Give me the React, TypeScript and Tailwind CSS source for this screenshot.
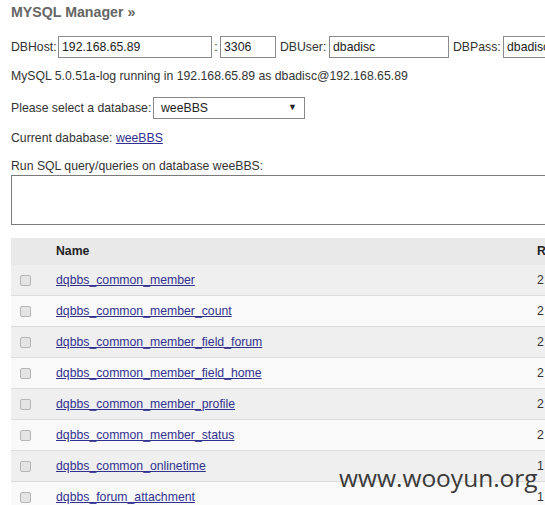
const tables = [
  { name: "dqbbs_common_member", rows: "2" },
  { name: "dqbbs_common_member_count", rows: "2" },
  { name: "dqbbs_common_member_field_forum", rows: "2" },
  { name: "dqbbs_common_member_field_home", rows: "2" },
  { name: "dqbbs_common_member_profile", rows: "2" },
  { name: "dqbbs_common_member_status", rows: "2" },
  { name: "dqbbs_common_onlinetime", rows: "1" },
  { name: "dqbbs_forum_attachment", rows: "1" },
];

function Field({ value, width }: { value: string; width: string }) {
  return (
    <div
      className={`${width} h-[22px] shrink-0 border border-[#8a8a8a] bg-white pl-[3px] leading-[20px] text-[#222]`}
    >
      {value}
    </div>
  );
}

export default function App() {
  return (
    <div className="relative h-[505px] w-[545px] overflow-hidden whitespace-nowrap bg-white font-['Liberation_Sans',Arial,sans-serif] text-[12.25px] text-[#333]">
      <div className="flex w-[600px] flex-col pl-[11px]">
        <div className="h-[24px] pt-[1px] text-[14.2px] font-bold leading-[22px] text-[#666]">
          MYSQL Manager »
        </div>

        <div className="mt-[12px] flex h-[22px] items-center">
          <span className="w-[47px] shrink-0">DBHost:</span>
          <Field value="192.168.65.89" width="w-[154px]" />
          <span className="w-[8px] shrink-0 text-center">:</span>
          <Field value="3306" width="w-[56px]" />
          <span className="w-[53px] shrink-0 pl-[4px]">DBUser:</span>
          <Field value="dbadisc" width="w-[120px]" />
          <span className="w-[54px] shrink-0 pl-[4px]">DBPass:</span>
          <Field value="dbadisc" width="w-[122px]" />
        </div>

        <div className="mt-[10px] h-[16px] leading-[16px]">
          MySQL 5.0.51a-log running in 192.168.65.89 as dbadisc@192.168.65.89
        </div>

        <div className="mt-[13px] flex h-[22px] items-center">
          <span className="w-[142px] shrink-0">Please select a database:</span>
          <div className="flex h-[22px] w-[152px] items-center justify-between border border-[#8a8a8a] bg-white pl-[7px] pr-[7px] text-[#222]">
            <span>weeBBS</span>
            <span className="text-[9px]">▼</span>
          </div>
        </div>

        <div className="mt-[11px] h-[16px] leading-[16px]">
          Current dababase:{" "}
          <a href="#" className="text-[#31318f] underline">
            weeBBS
          </a>
        </div>

        <div className="mt-[12px] h-[16px] leading-[16px]">
          Run SQL query/queries on database weeBBS:
        </div>

        <textarea className="mt-[1px] h-[50px] w-[560px] resize-none border border-[#7a7a7a] bg-white" />

        <div className="mt-[13px] w-[580px]">
          <div className="flex h-[27px] items-center bg-[#e9e9e9] font-bold text-[#222]">
            <div className="w-[45px] shrink-0" />
            <div className="w-[481px] shrink-0">Name</div>
            <div className="flex-1">R</div>
          </div>
          {tables.map((t, i) => (
            <div
              key={t.name}
              className={`flex h-[31px] items-center border-b border-[#dcdcdc] ${
                i % 2 === 0 ? "bg-[#efefef]" : "bg-[#f9f9f9]"
              }`}
            >
              <div className="w-[45px] shrink-0 pl-[9px]">
                <span className="block h-[11px] w-[11px] rounded-[2px] border border-[#b5b5b5] bg-[#e4e4e4]" />
              </div>
              <div className="w-[481px] shrink-0">
                <a href="#" className="text-[#31318f] underline">
                  {t.name}
                </a>
              </div>
              <div className="flex-1">{t.rows}</div>
            </div>
          ))}
        </div>
      </div>

      <div className="absolute left-[339px] top-[460px] font-['Open_Sans',sans-serif] text-[24.5px] leading-[36px] text-[#3a3a3a]">
        www.wooyun.org
      </div>
    </div>
  );
}
